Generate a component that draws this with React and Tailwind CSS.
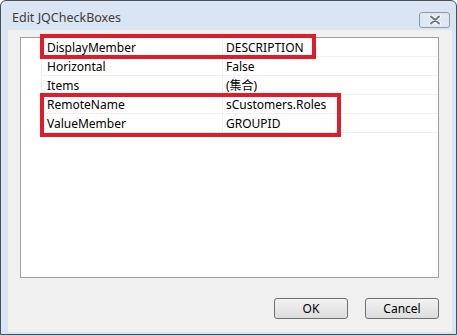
import React from "react";

const rows = [
  ["DisplayMember", "DESCRIPTION"],
  ["Horizontal", "False"],
  ["Items", "(集合)"],
  ["RemoteName", "sCustomers.Roles"],
  ["ValueMember", "GROUPID"],
];

export default function App() {
  return (
    <div
      className="relative w-[457px] h-[335px] bg-[#d9e5f2] border border-[#4a4f55] rounded-t-[6px] flex flex-col overflow-hidden"
      style={{ fontFamily: '"Noto Sans", "Noto Sans CJK TC", sans-serif' }}
    >
      <div className="h-[29px] flex items-center justify-between pl-[11px] pr-[6px] shrink-0">
        <span className="text-[12.5px] text-[#3c3c3c] leading-none mt-[6px]">Edit JQCheckBoxes</span>
        <div className="w-[31px] h-[16px] mt-[8px] rounded-[3px] border border-[#8e9aa8] bg-[#dfe8f2] flex items-center justify-center">
          <svg width="14" height="10" viewBox="0 0 14 10">
            <path d="M3 1.5 L11 8.5 M11 1.5 L3 8.5" stroke="#ffffff" strokeWidth="4" strokeLinecap="round" />
            <path d="M3 1.5 L11 8.5 M11 1.5 L3 8.5" stroke="#6f7780" strokeWidth="2" strokeLinecap="round" />
          </svg>
        </div>
      </div>
      <div className="ml-[7px] mr-[4px] mb-[3px] flex-1 bg-[#f0f0f0] flex flex-col pl-[12px] pr-[13px] pt-[7px] pb-[13px]">
        <div className="relative h-[241px] bg-white border border-[#a0a0a0] flex flex-col">
          {rows.map(([k, v]) => (
            <div key={k} className="flex h-[19px] shrink-0">
              <div className="w-[20px] shrink-0" />
              <div className="flex-1 flex border-b border-[#f0f0f0] border-l border-l-[#f0f0f0]">
                <div className="w-[181px] shrink-0 border-r border-[#f0f0f0] text-[12px] text-black pl-[5px] pt-[1px] flex items-center leading-none">
                  {k}
                </div>
                <div className="flex-1 text-[12px] text-black pl-[3px] pt-[1px] flex items-center leading-none">
                  {v}
                </div>
              </div>
            </div>
          ))}
          <div className="absolute left-[19px] top-[-4px] w-[276px] h-[25px] border-[4px] border-[#e01b2a]" />
          <div className="absolute left-[19px] top-[55px] w-[301px] h-[44px] border-[4px] border-[#e01b2a]" />
        </div>
        <div className="flex justify-end gap-[17px] mt-[20px]">
          <button className="w-[74px] h-[21px] rounded-[3px] border border-[#707070] bg-gradient-to-b from-[#f2f2f2] to-[#dddddd] text-[12px] text-black leading-none">
            OK
          </button>
          <button className="w-[74px] h-[21px] rounded-[3px] border border-[#707070] bg-gradient-to-b from-[#f2f2f2] to-[#dddddd] text-[12px] text-black leading-none">
            Cancel
          </button>
        </div>
      </div>
    </div>
  );
}
